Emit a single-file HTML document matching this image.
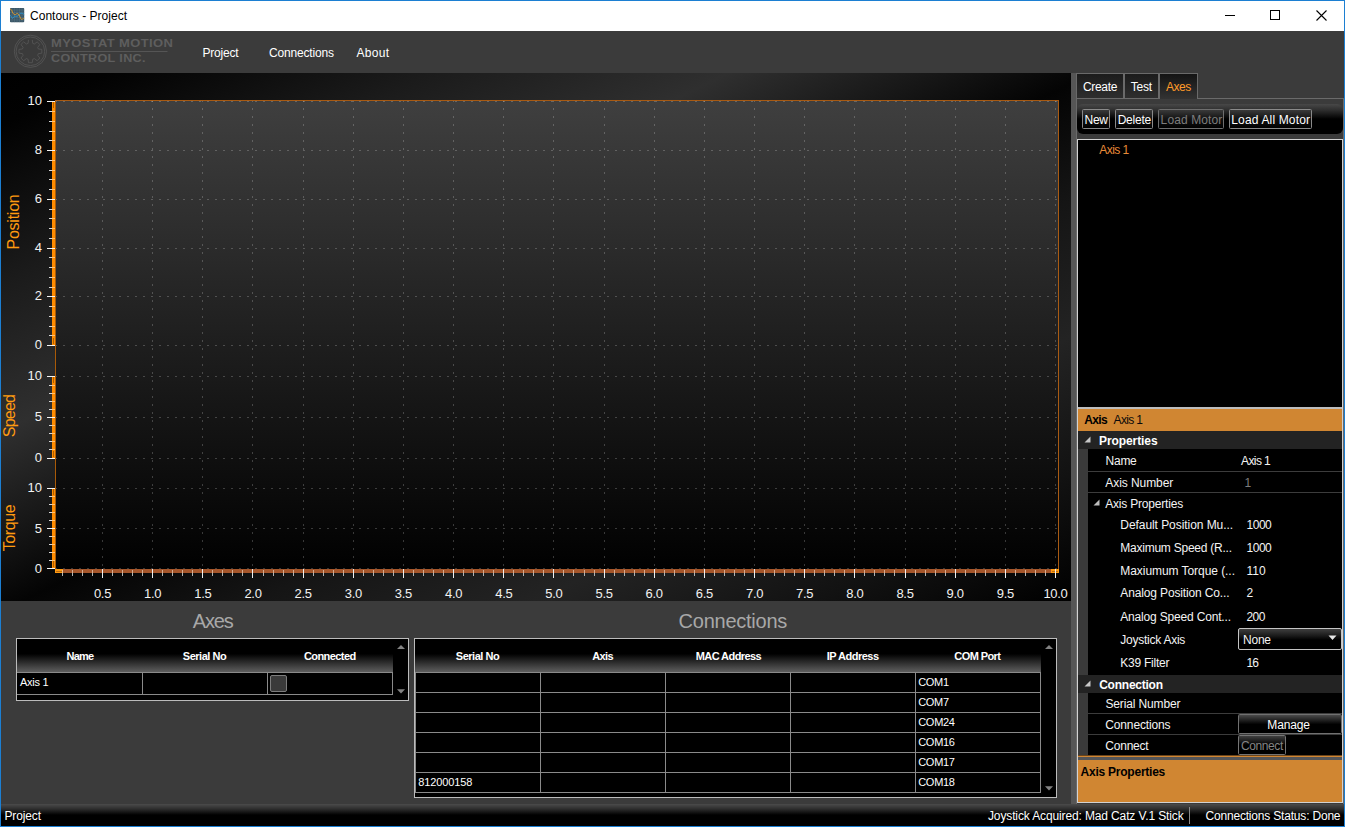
<!DOCTYPE html><html><head><meta charset="utf-8"><title>Contours - Project</title><style>
*{box-sizing:border-box;margin:0;padding:0}
html,body{width:1345px;height:827px;overflow:hidden;background:#3b3b3b}
body{position:relative;font-family:"Liberation Sans", sans-serif;font-size:12px;color:#fff}
.abs{position:absolute}
.ytick{position:absolute;left:0;width:42px;text-align:right;font-size:13px;line-height:16px;color:#f2f2f2}
.xtick{position:absolute;top:586px;width:40px;text-align:center;font-size:13px;line-height:16px;letter-spacing:-0.3px;color:#f2f2f2}
.ytitle{position:absolute;width:0;height:0;font-size:16px;color:#ff9a10;white-space:nowrap}
.ytitle span{position:absolute;left:0;top:0;line-height:20px;transform:translate(-50%,-50%) rotate(-90deg);display:block}
.t{position:absolute;white-space:nowrap}
</style></head><body>
<div class="abs" style="left:0;top:0;width:1345px;height:827px;background:#3b3b3b"></div>
<div class="abs" id="titlebar" style="left:0;top:0;width:1345px;height:31px;background:#fff"></div>
<svg class="abs" style="left:10px;top:8px" width="15" height="15" viewBox="0 0 15 15">
<rect x="0" y="0" width="14.2" height="14.2" rx="0.8" fill="#3a5666"/>
<g stroke="#5b7a8a" stroke-width="0.45" opacity="0.9"><path d="M0 2H14.2M0 4.5H14.2M0 7H14.2M0 9.5H14.2M0 12H14.2M2 0V14.2M4.5 0V14.2M7 0V14.2M9.5 0V14.2M12 0V14.2"/></g>
<path d="M0 7.5 C1 7.6 1.3 8.6 1.8 9.6 S3 10.6 3.6 9.2 S4.6 8.3 5.6 8.3 S7.6 8.4 8.6 7.3 S9.6 5.4 10.8 5.3 S13 5.4 14.2 6.6" fill="none" stroke="#2a9ad8" stroke-width="0.9"/>
<path d="M0 1.3 C1 1.3 1.6 1.6 2 3 S3 5.8 4.2 6.4 S5.8 6.3 6.6 5.7 S8.2 5.6 9 7 S10 9.2 10.6 10.3 S11.6 11.8 12.6 11 S13.6 10.5 14.2 10.5" fill="none" stroke="#e09a2c" stroke-width="0.95"/>
</svg>
<div class="t" style="left:30.0px;top:7.5px;font-size:12px;line-height:16px;letter-spacing:0.02px;color:#000;">Contours - Project</div>
<svg class="abs" style="left:1210px;top:1px" width="134" height="30" viewBox="0 0 134 30" shape-rendering="crispEdges">
<rect x="15" y="14" width="10" height="1" fill="#000"/>
<rect x="60.5" y="9.5" width="9" height="9" fill="none" stroke="#000" stroke-width="1"/>
<g shape-rendering="geometricPrecision"><path d="M106.5 9.5 L116.5 19.5 M116.5 9.5 L106.5 19.5" stroke="#000" stroke-width="1.1" fill="none"/></g>
</svg>
<svg class="abs" style="left:12px;top:33px" width="165" height="38" viewBox="12 33 165 38">
<g fill="none" stroke="#5a5a5a" stroke-width="0.75">
<circle cx="30.4" cy="51.3" r="16.1"/><circle cx="30.4" cy="51.3" r="14.3"/>
<path d="M32.30 39.86 L32.72 43.33 L34.40 44.03 L37.14 41.86 L39.84 44.56 L37.67 47.30 L38.37 48.98 L41.84 49.40 L41.84 53.20 L38.37 53.62 L37.67 55.30 L39.84 58.04 L37.14 60.74 L34.40 58.57 L32.72 59.27 L32.30 62.74 L28.50 62.74 L28.08 59.27 L26.40 58.57 L23.66 60.74 L20.96 58.04 L23.13 55.30 L22.43 53.62 L18.96 53.20 L18.96 49.40 L22.43 48.98 L23.13 47.30 L20.96 44.56 L23.66 41.86 L26.40 44.03 L28.08 43.33 L28.50 39.86" stroke-linejoin="round"/>
</g>
<rect x="51" y="51" width="116.5" height="1" fill="#555"/>
</svg>
<div class="t" style="left:50.6px;top:37.1px;font-size:10.7px;line-height:12px;font-weight:bold;letter-spacing:0.3px;color:#5e5e5e;transform:scaleX(1.215);transform-origin:0 50%">MYOSTAT MOTION</div>
<div class="t" style="left:50.6px;top:52.4px;font-size:10.7px;line-height:12px;font-weight:bold;letter-spacing:0.3px;color:#5e5e5e;transform:scaleX(1.177);transform-origin:0 50%">CONTROL INC.</div>
<div class="t" style="left:202.4px;top:44.5px;font-size:12px;line-height:16px;letter-spacing:-0.19px;color:#fff;">Project</div>
<div class="t" style="left:269.0px;top:44.5px;font-size:12px;line-height:16px;letter-spacing:-0.17px;color:#fff;">Connections</div>
<div class="t" style="left:356.5px;top:44.5px;font-size:12px;line-height:16px;letter-spacing:0.29px;color:#fff;">About</div>
<svg class="abs" style="left:0;top:0" width="1345" height="827" viewBox="0 0 1345 827" shape-rendering="crispEdges">
<defs>
<linearGradient id="gOuter" x1="0" y1="0" x2="1" y2="1"><stop offset="0" stop-color="#000"/><stop offset="0.05" stop-color="#020202"/><stop offset="0.2" stop-color="#1b1b1b"/><stop offset="0.34" stop-color="#2f2f2f"/><stop offset="0.44" stop-color="#161616"/><stop offset="0.51" stop-color="#040404"/><stop offset="0.62" stop-color="#151515"/><stop offset="0.75" stop-color="#232323"/><stop offset="0.88" stop-color="#121212"/><stop offset="1" stop-color="#000"/></linearGradient>
<linearGradient id="gPlot" x1="0" y1="0" x2="0" y2="1"><stop offset="0" stop-color="#3f3f3f"/><stop offset="0.5" stop-color="#1f1f1f"/><stop offset="1" stop-color="#010101"/></linearGradient>
</defs>
<rect x="1" y="73" width="1070" height="528" fill="url(#gOuter)"/>
<rect x="55" y="101" width="1004" height="468" fill="url(#gPlot)"/>
<rect x="55" y="100" width="1004" height="1" fill="#a85a12"/>
<rect x="1058" y="101" width="1" height="468" fill="#a85a12"/>
<line x1="102.5" y1="100" x2="102.5" y2="569" stroke="#fff" stroke-opacity="0.21" stroke-width="1" stroke-dasharray="2 6"/>
<line x1="152.5" y1="100" x2="152.5" y2="569" stroke="#fff" stroke-opacity="0.21" stroke-width="1" stroke-dasharray="2 6"/>
<line x1="202.5" y1="100" x2="202.5" y2="569" stroke="#fff" stroke-opacity="0.21" stroke-width="1" stroke-dasharray="2 6"/>
<line x1="252.5" y1="100" x2="252.5" y2="569" stroke="#fff" stroke-opacity="0.21" stroke-width="1" stroke-dasharray="2 6"/>
<line x1="303.5" y1="100" x2="303.5" y2="569" stroke="#fff" stroke-opacity="0.21" stroke-width="1" stroke-dasharray="2 6"/>
<line x1="353.5" y1="100" x2="353.5" y2="569" stroke="#fff" stroke-opacity="0.21" stroke-width="1" stroke-dasharray="2 6"/>
<line x1="403.5" y1="100" x2="403.5" y2="569" stroke="#fff" stroke-opacity="0.21" stroke-width="1" stroke-dasharray="2 6"/>
<line x1="453.5" y1="100" x2="453.5" y2="569" stroke="#fff" stroke-opacity="0.21" stroke-width="1" stroke-dasharray="2 6"/>
<line x1="503.5" y1="100" x2="503.5" y2="569" stroke="#fff" stroke-opacity="0.21" stroke-width="1" stroke-dasharray="2 6"/>
<line x1="553.5" y1="100" x2="553.5" y2="569" stroke="#fff" stroke-opacity="0.21" stroke-width="1" stroke-dasharray="2 6"/>
<line x1="604.5" y1="100" x2="604.5" y2="569" stroke="#fff" stroke-opacity="0.21" stroke-width="1" stroke-dasharray="2 6"/>
<line x1="654.5" y1="100" x2="654.5" y2="569" stroke="#fff" stroke-opacity="0.21" stroke-width="1" stroke-dasharray="2 6"/>
<line x1="704.5" y1="100" x2="704.5" y2="569" stroke="#fff" stroke-opacity="0.21" stroke-width="1" stroke-dasharray="2 6"/>
<line x1="754.5" y1="100" x2="754.5" y2="569" stroke="#fff" stroke-opacity="0.21" stroke-width="1" stroke-dasharray="2 6"/>
<line x1="804.5" y1="100" x2="804.5" y2="569" stroke="#fff" stroke-opacity="0.21" stroke-width="1" stroke-dasharray="2 6"/>
<line x1="854.5" y1="100" x2="854.5" y2="569" stroke="#fff" stroke-opacity="0.21" stroke-width="1" stroke-dasharray="2 6"/>
<line x1="905.5" y1="100" x2="905.5" y2="569" stroke="#fff" stroke-opacity="0.21" stroke-width="1" stroke-dasharray="2 6"/>
<line x1="955.5" y1="100" x2="955.5" y2="569" stroke="#fff" stroke-opacity="0.21" stroke-width="1" stroke-dasharray="2 6"/>
<line x1="1005.5" y1="100" x2="1005.5" y2="569" stroke="#fff" stroke-opacity="0.21" stroke-width="1" stroke-dasharray="2 6"/>
<line x1="1055.5" y1="100" x2="1055.5" y2="569" stroke="#fff" stroke-opacity="0.21" stroke-width="1" stroke-dasharray="2 6"/>
<line x1="55" y1="345.5" x2="1058" y2="345.5" stroke="#fff" stroke-opacity="0.21" stroke-width="1" stroke-dasharray="2 6"/>
<line x1="55" y1="296.5" x2="1058" y2="296.5" stroke="#fff" stroke-opacity="0.21" stroke-width="1" stroke-dasharray="2 6"/>
<line x1="55" y1="248.5" x2="1058" y2="248.5" stroke="#fff" stroke-opacity="0.21" stroke-width="1" stroke-dasharray="2 6"/>
<line x1="55" y1="199.5" x2="1058" y2="199.5" stroke="#fff" stroke-opacity="0.21" stroke-width="1" stroke-dasharray="2 6"/>
<line x1="55" y1="150.5" x2="1058" y2="150.5" stroke="#fff" stroke-opacity="0.21" stroke-width="1" stroke-dasharray="2 6"/>
<line x1="55" y1="101.5" x2="1058" y2="101.5" stroke="#fff" stroke-opacity="0.21" stroke-width="1" stroke-dasharray="2 6"/>
<rect x="52" y="101" width="3" height="245" fill="#ff8c00"/><rect x="55" y="101" width="1" height="245" fill="#a85a08"/>
<line x1="55" y1="458.5" x2="1058" y2="458.5" stroke="#fff" stroke-opacity="0.21" stroke-width="1" stroke-dasharray="2 6"/>
<line x1="55" y1="417.5" x2="1058" y2="417.5" stroke="#fff" stroke-opacity="0.21" stroke-width="1" stroke-dasharray="2 6"/>
<line x1="55" y1="376.5" x2="1058" y2="376.5" stroke="#fff" stroke-opacity="0.21" stroke-width="1" stroke-dasharray="2 6"/>
<rect x="52" y="376" width="3" height="83" fill="#ff8c00"/><rect x="55" y="376" width="1" height="83" fill="#a85a08"/>
<line x1="55" y1="568.5" x2="1058" y2="568.5" stroke="#fff" stroke-opacity="0.21" stroke-width="1" stroke-dasharray="2 6"/>
<line x1="55" y1="528.5" x2="1058" y2="528.5" stroke="#fff" stroke-opacity="0.21" stroke-width="1" stroke-dasharray="2 6"/>
<line x1="55" y1="488.5" x2="1058" y2="488.5" stroke="#fff" stroke-opacity="0.21" stroke-width="1" stroke-dasharray="2 6"/>
<rect x="52" y="488" width="3" height="81" fill="#ff8c00"/><rect x="55" y="488" width="1" height="81" fill="#a85a08"/>
<rect x="55" y="100" width="1" height="469" fill="#a85a08"/>
<rect x="47" y="345" width="8" height="1" fill="#f4f4f4"/>
<rect x="49" y="335" width="3" height="1" fill="#d8d8d8"/><rect x="52" y="335" width="3" height="1" fill="#ffc070"/>
<rect x="49" y="326" width="3" height="1" fill="#d8d8d8"/><rect x="52" y="326" width="3" height="1" fill="#ffc070"/>
<rect x="49" y="316" width="3" height="1" fill="#d8d8d8"/><rect x="52" y="316" width="3" height="1" fill="#ffc070"/>
<rect x="49" y="306" width="3" height="1" fill="#d8d8d8"/><rect x="52" y="306" width="3" height="1" fill="#ffc070"/>
<rect x="47" y="296" width="8" height="1" fill="#f4f4f4"/>
<rect x="49" y="287" width="3" height="1" fill="#d8d8d8"/><rect x="52" y="287" width="3" height="1" fill="#ffc070"/>
<rect x="49" y="277" width="3" height="1" fill="#d8d8d8"/><rect x="52" y="277" width="3" height="1" fill="#ffc070"/>
<rect x="49" y="267" width="3" height="1" fill="#d8d8d8"/><rect x="52" y="267" width="3" height="1" fill="#ffc070"/>
<rect x="49" y="257" width="3" height="1" fill="#d8d8d8"/><rect x="52" y="257" width="3" height="1" fill="#ffc070"/>
<rect x="47" y="248" width="8" height="1" fill="#f4f4f4"/>
<rect x="49" y="238" width="3" height="1" fill="#d8d8d8"/><rect x="52" y="238" width="3" height="1" fill="#ffc070"/>
<rect x="49" y="228" width="3" height="1" fill="#d8d8d8"/><rect x="52" y="228" width="3" height="1" fill="#ffc070"/>
<rect x="49" y="218" width="3" height="1" fill="#d8d8d8"/><rect x="52" y="218" width="3" height="1" fill="#ffc070"/>
<rect x="49" y="209" width="3" height="1" fill="#d8d8d8"/><rect x="52" y="209" width="3" height="1" fill="#ffc070"/>
<rect x="47" y="199" width="8" height="1" fill="#f4f4f4"/>
<rect x="49" y="189" width="3" height="1" fill="#d8d8d8"/><rect x="52" y="189" width="3" height="1" fill="#ffc070"/>
<rect x="49" y="179" width="3" height="1" fill="#d8d8d8"/><rect x="52" y="179" width="3" height="1" fill="#ffc070"/>
<rect x="49" y="170" width="3" height="1" fill="#d8d8d8"/><rect x="52" y="170" width="3" height="1" fill="#ffc070"/>
<rect x="49" y="160" width="3" height="1" fill="#d8d8d8"/><rect x="52" y="160" width="3" height="1" fill="#ffc070"/>
<rect x="47" y="150" width="8" height="1" fill="#f4f4f4"/>
<rect x="49" y="140" width="3" height="1" fill="#d8d8d8"/><rect x="52" y="140" width="3" height="1" fill="#ffc070"/>
<rect x="49" y="131" width="3" height="1" fill="#d8d8d8"/><rect x="52" y="131" width="3" height="1" fill="#ffc070"/>
<rect x="49" y="121" width="3" height="1" fill="#d8d8d8"/><rect x="52" y="121" width="3" height="1" fill="#ffc070"/>
<rect x="49" y="111" width="3" height="1" fill="#d8d8d8"/><rect x="52" y="111" width="3" height="1" fill="#ffc070"/>
<rect x="47" y="101" width="8" height="1" fill="#f4f4f4"/>
<rect x="47" y="458" width="8" height="1" fill="#f4f4f4"/>
<rect x="49" y="449" width="3" height="1" fill="#d8d8d8"/><rect x="52" y="449" width="3" height="1" fill="#ffc070"/>
<rect x="49" y="441" width="3" height="1" fill="#d8d8d8"/><rect x="52" y="441" width="3" height="1" fill="#ffc070"/>
<rect x="49" y="433" width="3" height="1" fill="#d8d8d8"/><rect x="52" y="433" width="3" height="1" fill="#ffc070"/>
<rect x="49" y="425" width="3" height="1" fill="#d8d8d8"/><rect x="52" y="425" width="3" height="1" fill="#ffc070"/>
<rect x="47" y="417" width="8" height="1" fill="#f4f4f4"/>
<rect x="49" y="409" width="3" height="1" fill="#d8d8d8"/><rect x="52" y="409" width="3" height="1" fill="#ffc070"/>
<rect x="49" y="401" width="3" height="1" fill="#d8d8d8"/><rect x="52" y="401" width="3" height="1" fill="#ffc070"/>
<rect x="49" y="393" width="3" height="1" fill="#d8d8d8"/><rect x="52" y="393" width="3" height="1" fill="#ffc070"/>
<rect x="49" y="385" width="3" height="1" fill="#d8d8d8"/><rect x="52" y="385" width="3" height="1" fill="#ffc070"/>
<rect x="47" y="376" width="8" height="1" fill="#f4f4f4"/>
<rect x="47" y="568" width="8" height="1" fill="#f4f4f4"/>
<rect x="49" y="560" width="3" height="1" fill="#d8d8d8"/><rect x="52" y="560" width="3" height="1" fill="#ffc070"/>
<rect x="49" y="552" width="3" height="1" fill="#d8d8d8"/><rect x="52" y="552" width="3" height="1" fill="#ffc070"/>
<rect x="49" y="544" width="3" height="1" fill="#d8d8d8"/><rect x="52" y="544" width="3" height="1" fill="#ffc070"/>
<rect x="49" y="536" width="3" height="1" fill="#d8d8d8"/><rect x="52" y="536" width="3" height="1" fill="#ffc070"/>
<rect x="47" y="528" width="8" height="1" fill="#f4f4f4"/>
<rect x="49" y="520" width="3" height="1" fill="#d8d8d8"/><rect x="52" y="520" width="3" height="1" fill="#ffc070"/>
<rect x="49" y="512" width="3" height="1" fill="#d8d8d8"/><rect x="52" y="512" width="3" height="1" fill="#ffc070"/>
<rect x="49" y="504" width="3" height="1" fill="#d8d8d8"/><rect x="52" y="504" width="3" height="1" fill="#ffc070"/>
<rect x="49" y="496" width="3" height="1" fill="#d8d8d8"/><rect x="52" y="496" width="3" height="1" fill="#ffc070"/>
<rect x="47" y="488" width="8" height="1" fill="#f4f4f4"/>
<rect x="53" y="102" width="1" height="6" fill="#b06000"/><rect x="53" y="338" width="1" height="6" fill="#b06000"/>
<rect x="53" y="377" width="1" height="6" fill="#b06000"/><rect x="53" y="451" width="1" height="6" fill="#b06000"/>
<rect x="53" y="489" width="1" height="6" fill="#b06000"/><rect x="53" y="561" width="1" height="6" fill="#b06000"/>
<rect x="55" y="569" width="1004" height="4" fill="#a5562b"/>
<rect x="55" y="569" width="8" height="4" fill="#ff9a10"/>
<rect x="56" y="570.5" width="6" height="1" fill="#b86a10"/>
<rect x="1051" y="569" width="8" height="4" fill="#ff9a10"/>
<rect x="1052" y="570.5" width="6" height="1" fill="#b86a10"/>
<rect x="62" y="570" width="1" height="3" fill="#e8c8b0" fill-opacity="0.75"/><rect x="62" y="573" width="1" height="3" fill="#b4b4b4"/>
<rect x="72" y="570" width="1" height="3" fill="#e8c8b0" fill-opacity="0.75"/><rect x="72" y="573" width="1" height="3" fill="#b4b4b4"/>
<rect x="82" y="570" width="1" height="3" fill="#e8c8b0" fill-opacity="0.75"/><rect x="82" y="573" width="1" height="3" fill="#b4b4b4"/>
<rect x="92" y="570" width="1" height="3" fill="#e8c8b0" fill-opacity="0.75"/><rect x="92" y="573" width="1" height="3" fill="#b4b4b4"/>
<rect x="102" y="569" width="1" height="9" fill="#f0f0f0"/>
<rect x="112" y="570" width="1" height="3" fill="#e8c8b0" fill-opacity="0.75"/><rect x="112" y="573" width="1" height="3" fill="#b4b4b4"/>
<rect x="122" y="570" width="1" height="3" fill="#e8c8b0" fill-opacity="0.75"/><rect x="122" y="573" width="1" height="3" fill="#b4b4b4"/>
<rect x="132" y="570" width="1" height="3" fill="#e8c8b0" fill-opacity="0.75"/><rect x="132" y="573" width="1" height="3" fill="#b4b4b4"/>
<rect x="142" y="570" width="1" height="3" fill="#e8c8b0" fill-opacity="0.75"/><rect x="142" y="573" width="1" height="3" fill="#b4b4b4"/>
<rect x="152" y="569" width="1" height="9" fill="#f0f0f0"/>
<rect x="162" y="570" width="1" height="3" fill="#e8c8b0" fill-opacity="0.75"/><rect x="162" y="573" width="1" height="3" fill="#b4b4b4"/>
<rect x="172" y="570" width="1" height="3" fill="#e8c8b0" fill-opacity="0.75"/><rect x="172" y="573" width="1" height="3" fill="#b4b4b4"/>
<rect x="182" y="570" width="1" height="3" fill="#e8c8b0" fill-opacity="0.75"/><rect x="182" y="573" width="1" height="3" fill="#b4b4b4"/>
<rect x="192" y="570" width="1" height="3" fill="#e8c8b0" fill-opacity="0.75"/><rect x="192" y="573" width="1" height="3" fill="#b4b4b4"/>
<rect x="202" y="569" width="1" height="9" fill="#f0f0f0"/>
<rect x="212" y="570" width="1" height="3" fill="#e8c8b0" fill-opacity="0.75"/><rect x="212" y="573" width="1" height="3" fill="#b4b4b4"/>
<rect x="222" y="570" width="1" height="3" fill="#e8c8b0" fill-opacity="0.75"/><rect x="222" y="573" width="1" height="3" fill="#b4b4b4"/>
<rect x="232" y="570" width="1" height="3" fill="#e8c8b0" fill-opacity="0.75"/><rect x="232" y="573" width="1" height="3" fill="#b4b4b4"/>
<rect x="242" y="570" width="1" height="3" fill="#e8c8b0" fill-opacity="0.75"/><rect x="242" y="573" width="1" height="3" fill="#b4b4b4"/>
<rect x="252" y="569" width="1" height="9" fill="#f0f0f0"/>
<rect x="263" y="570" width="1" height="3" fill="#e8c8b0" fill-opacity="0.75"/><rect x="263" y="573" width="1" height="3" fill="#b4b4b4"/>
<rect x="273" y="570" width="1" height="3" fill="#e8c8b0" fill-opacity="0.75"/><rect x="273" y="573" width="1" height="3" fill="#b4b4b4"/>
<rect x="283" y="570" width="1" height="3" fill="#e8c8b0" fill-opacity="0.75"/><rect x="283" y="573" width="1" height="3" fill="#b4b4b4"/>
<rect x="293" y="570" width="1" height="3" fill="#e8c8b0" fill-opacity="0.75"/><rect x="293" y="573" width="1" height="3" fill="#b4b4b4"/>
<rect x="303" y="569" width="1" height="9" fill="#f0f0f0"/>
<rect x="313" y="570" width="1" height="3" fill="#e8c8b0" fill-opacity="0.75"/><rect x="313" y="573" width="1" height="3" fill="#b4b4b4"/>
<rect x="323" y="570" width="1" height="3" fill="#e8c8b0" fill-opacity="0.75"/><rect x="323" y="573" width="1" height="3" fill="#b4b4b4"/>
<rect x="333" y="570" width="1" height="3" fill="#e8c8b0" fill-opacity="0.75"/><rect x="333" y="573" width="1" height="3" fill="#b4b4b4"/>
<rect x="343" y="570" width="1" height="3" fill="#e8c8b0" fill-opacity="0.75"/><rect x="343" y="573" width="1" height="3" fill="#b4b4b4"/>
<rect x="353" y="569" width="1" height="9" fill="#f0f0f0"/>
<rect x="363" y="570" width="1" height="3" fill="#e8c8b0" fill-opacity="0.75"/><rect x="363" y="573" width="1" height="3" fill="#b4b4b4"/>
<rect x="373" y="570" width="1" height="3" fill="#e8c8b0" fill-opacity="0.75"/><rect x="373" y="573" width="1" height="3" fill="#b4b4b4"/>
<rect x="383" y="570" width="1" height="3" fill="#e8c8b0" fill-opacity="0.75"/><rect x="383" y="573" width="1" height="3" fill="#b4b4b4"/>
<rect x="393" y="570" width="1" height="3" fill="#e8c8b0" fill-opacity="0.75"/><rect x="393" y="573" width="1" height="3" fill="#b4b4b4"/>
<rect x="403" y="569" width="1" height="9" fill="#f0f0f0"/>
<rect x="413" y="570" width="1" height="3" fill="#e8c8b0" fill-opacity="0.75"/><rect x="413" y="573" width="1" height="3" fill="#b4b4b4"/>
<rect x="423" y="570" width="1" height="3" fill="#e8c8b0" fill-opacity="0.75"/><rect x="423" y="573" width="1" height="3" fill="#b4b4b4"/>
<rect x="433" y="570" width="1" height="3" fill="#e8c8b0" fill-opacity="0.75"/><rect x="433" y="573" width="1" height="3" fill="#b4b4b4"/>
<rect x="443" y="570" width="1" height="3" fill="#e8c8b0" fill-opacity="0.75"/><rect x="443" y="573" width="1" height="3" fill="#b4b4b4"/>
<rect x="453" y="569" width="1" height="9" fill="#f0f0f0"/>
<rect x="463" y="570" width="1" height="3" fill="#e8c8b0" fill-opacity="0.75"/><rect x="463" y="573" width="1" height="3" fill="#b4b4b4"/>
<rect x="473" y="570" width="1" height="3" fill="#e8c8b0" fill-opacity="0.75"/><rect x="473" y="573" width="1" height="3" fill="#b4b4b4"/>
<rect x="483" y="570" width="1" height="3" fill="#e8c8b0" fill-opacity="0.75"/><rect x="483" y="573" width="1" height="3" fill="#b4b4b4"/>
<rect x="493" y="570" width="1" height="3" fill="#e8c8b0" fill-opacity="0.75"/><rect x="493" y="573" width="1" height="3" fill="#b4b4b4"/>
<rect x="503" y="569" width="1" height="9" fill="#f0f0f0"/>
<rect x="513" y="570" width="1" height="3" fill="#e8c8b0" fill-opacity="0.75"/><rect x="513" y="573" width="1" height="3" fill="#b4b4b4"/>
<rect x="523" y="570" width="1" height="3" fill="#e8c8b0" fill-opacity="0.75"/><rect x="523" y="573" width="1" height="3" fill="#b4b4b4"/>
<rect x="533" y="570" width="1" height="3" fill="#e8c8b0" fill-opacity="0.75"/><rect x="533" y="573" width="1" height="3" fill="#b4b4b4"/>
<rect x="543" y="570" width="1" height="3" fill="#e8c8b0" fill-opacity="0.75"/><rect x="543" y="573" width="1" height="3" fill="#b4b4b4"/>
<rect x="553" y="569" width="1" height="9" fill="#f0f0f0"/>
<rect x="563" y="570" width="1" height="3" fill="#e8c8b0" fill-opacity="0.75"/><rect x="563" y="573" width="1" height="3" fill="#b4b4b4"/>
<rect x="573" y="570" width="1" height="3" fill="#e8c8b0" fill-opacity="0.75"/><rect x="573" y="573" width="1" height="3" fill="#b4b4b4"/>
<rect x="584" y="570" width="1" height="3" fill="#e8c8b0" fill-opacity="0.75"/><rect x="584" y="573" width="1" height="3" fill="#b4b4b4"/>
<rect x="594" y="570" width="1" height="3" fill="#e8c8b0" fill-opacity="0.75"/><rect x="594" y="573" width="1" height="3" fill="#b4b4b4"/>
<rect x="604" y="569" width="1" height="9" fill="#f0f0f0"/>
<rect x="614" y="570" width="1" height="3" fill="#e8c8b0" fill-opacity="0.75"/><rect x="614" y="573" width="1" height="3" fill="#b4b4b4"/>
<rect x="624" y="570" width="1" height="3" fill="#e8c8b0" fill-opacity="0.75"/><rect x="624" y="573" width="1" height="3" fill="#b4b4b4"/>
<rect x="634" y="570" width="1" height="3" fill="#e8c8b0" fill-opacity="0.75"/><rect x="634" y="573" width="1" height="3" fill="#b4b4b4"/>
<rect x="644" y="570" width="1" height="3" fill="#e8c8b0" fill-opacity="0.75"/><rect x="644" y="573" width="1" height="3" fill="#b4b4b4"/>
<rect x="654" y="569" width="1" height="9" fill="#f0f0f0"/>
<rect x="664" y="570" width="1" height="3" fill="#e8c8b0" fill-opacity="0.75"/><rect x="664" y="573" width="1" height="3" fill="#b4b4b4"/>
<rect x="674" y="570" width="1" height="3" fill="#e8c8b0" fill-opacity="0.75"/><rect x="674" y="573" width="1" height="3" fill="#b4b4b4"/>
<rect x="684" y="570" width="1" height="3" fill="#e8c8b0" fill-opacity="0.75"/><rect x="684" y="573" width="1" height="3" fill="#b4b4b4"/>
<rect x="694" y="570" width="1" height="3" fill="#e8c8b0" fill-opacity="0.75"/><rect x="694" y="573" width="1" height="3" fill="#b4b4b4"/>
<rect x="704" y="569" width="1" height="9" fill="#f0f0f0"/>
<rect x="714" y="570" width="1" height="3" fill="#e8c8b0" fill-opacity="0.75"/><rect x="714" y="573" width="1" height="3" fill="#b4b4b4"/>
<rect x="724" y="570" width="1" height="3" fill="#e8c8b0" fill-opacity="0.75"/><rect x="724" y="573" width="1" height="3" fill="#b4b4b4"/>
<rect x="734" y="570" width="1" height="3" fill="#e8c8b0" fill-opacity="0.75"/><rect x="734" y="573" width="1" height="3" fill="#b4b4b4"/>
<rect x="744" y="570" width="1" height="3" fill="#e8c8b0" fill-opacity="0.75"/><rect x="744" y="573" width="1" height="3" fill="#b4b4b4"/>
<rect x="754" y="569" width="1" height="9" fill="#f0f0f0"/>
<rect x="764" y="570" width="1" height="3" fill="#e8c8b0" fill-opacity="0.75"/><rect x="764" y="573" width="1" height="3" fill="#b4b4b4"/>
<rect x="774" y="570" width="1" height="3" fill="#e8c8b0" fill-opacity="0.75"/><rect x="774" y="573" width="1" height="3" fill="#b4b4b4"/>
<rect x="784" y="570" width="1" height="3" fill="#e8c8b0" fill-opacity="0.75"/><rect x="784" y="573" width="1" height="3" fill="#b4b4b4"/>
<rect x="794" y="570" width="1" height="3" fill="#e8c8b0" fill-opacity="0.75"/><rect x="794" y="573" width="1" height="3" fill="#b4b4b4"/>
<rect x="804" y="569" width="1" height="9" fill="#f0f0f0"/>
<rect x="814" y="570" width="1" height="3" fill="#e8c8b0" fill-opacity="0.75"/><rect x="814" y="573" width="1" height="3" fill="#b4b4b4"/>
<rect x="824" y="570" width="1" height="3" fill="#e8c8b0" fill-opacity="0.75"/><rect x="824" y="573" width="1" height="3" fill="#b4b4b4"/>
<rect x="834" y="570" width="1" height="3" fill="#e8c8b0" fill-opacity="0.75"/><rect x="834" y="573" width="1" height="3" fill="#b4b4b4"/>
<rect x="844" y="570" width="1" height="3" fill="#e8c8b0" fill-opacity="0.75"/><rect x="844" y="573" width="1" height="3" fill="#b4b4b4"/>
<rect x="854" y="569" width="1" height="9" fill="#f0f0f0"/>
<rect x="864" y="570" width="1" height="3" fill="#e8c8b0" fill-opacity="0.75"/><rect x="864" y="573" width="1" height="3" fill="#b4b4b4"/>
<rect x="874" y="570" width="1" height="3" fill="#e8c8b0" fill-opacity="0.75"/><rect x="874" y="573" width="1" height="3" fill="#b4b4b4"/>
<rect x="884" y="570" width="1" height="3" fill="#e8c8b0" fill-opacity="0.75"/><rect x="884" y="573" width="1" height="3" fill="#b4b4b4"/>
<rect x="894" y="570" width="1" height="3" fill="#e8c8b0" fill-opacity="0.75"/><rect x="894" y="573" width="1" height="3" fill="#b4b4b4"/>
<rect x="905" y="569" width="1" height="9" fill="#f0f0f0"/>
<rect x="915" y="570" width="1" height="3" fill="#e8c8b0" fill-opacity="0.75"/><rect x="915" y="573" width="1" height="3" fill="#b4b4b4"/>
<rect x="925" y="570" width="1" height="3" fill="#e8c8b0" fill-opacity="0.75"/><rect x="925" y="573" width="1" height="3" fill="#b4b4b4"/>
<rect x="935" y="570" width="1" height="3" fill="#e8c8b0" fill-opacity="0.75"/><rect x="935" y="573" width="1" height="3" fill="#b4b4b4"/>
<rect x="945" y="570" width="1" height="3" fill="#e8c8b0" fill-opacity="0.75"/><rect x="945" y="573" width="1" height="3" fill="#b4b4b4"/>
<rect x="955" y="569" width="1" height="9" fill="#f0f0f0"/>
<rect x="965" y="570" width="1" height="3" fill="#e8c8b0" fill-opacity="0.75"/><rect x="965" y="573" width="1" height="3" fill="#b4b4b4"/>
<rect x="975" y="570" width="1" height="3" fill="#e8c8b0" fill-opacity="0.75"/><rect x="975" y="573" width="1" height="3" fill="#b4b4b4"/>
<rect x="985" y="570" width="1" height="3" fill="#e8c8b0" fill-opacity="0.75"/><rect x="985" y="573" width="1" height="3" fill="#b4b4b4"/>
<rect x="995" y="570" width="1" height="3" fill="#e8c8b0" fill-opacity="0.75"/><rect x="995" y="573" width="1" height="3" fill="#b4b4b4"/>
<rect x="1005" y="569" width="1" height="9" fill="#f0f0f0"/>
<rect x="1015" y="570" width="1" height="3" fill="#e8c8b0" fill-opacity="0.75"/><rect x="1015" y="573" width="1" height="3" fill="#b4b4b4"/>
<rect x="1025" y="570" width="1" height="3" fill="#e8c8b0" fill-opacity="0.75"/><rect x="1025" y="573" width="1" height="3" fill="#b4b4b4"/>
<rect x="1035" y="570" width="1" height="3" fill="#e8c8b0" fill-opacity="0.75"/><rect x="1035" y="573" width="1" height="3" fill="#b4b4b4"/>
<rect x="1045" y="570" width="1" height="3" fill="#e8c8b0" fill-opacity="0.75"/><rect x="1045" y="573" width="1" height="3" fill="#b4b4b4"/>
<rect x="1055" y="569" width="1" height="9" fill="#f0f0f0"/>
<rect x="55" y="100" width="1004" height="1" fill="#a85a12"/>
</svg>
<div class="ytick" style="top:337.2px">0</div>
<div class="ytick" style="top:288.4px">2</div>
<div class="ytick" style="top:239.7px">4</div>
<div class="ytick" style="top:190.9px">6</div>
<div class="ytick" style="top:142.2px">8</div>
<div class="ytick" style="top:93.4px">10</div>
<div class="ytick" style="top:449.6px">0</div>
<div class="ytick" style="top:409.0px">5</div>
<div class="ytick" style="top:368.4px">10</div>
<div class="ytick" style="top:560.5px">0</div>
<div class="ytick" style="top:520.5px">5</div>
<div class="ytick" style="top:480.4px">10</div>
<div class="xtick" style="left:82.5px">0.5</div>
<div class="xtick" style="left:132.7px">1.0</div>
<div class="xtick" style="left:182.8px">1.5</div>
<div class="xtick" style="left:233.0px">2.0</div>
<div class="xtick" style="left:283.1px">2.5</div>
<div class="xtick" style="left:333.3px">3.0</div>
<div class="xtick" style="left:383.4px">3.5</div>
<div class="xtick" style="left:433.6px">4.0</div>
<div class="xtick" style="left:483.8px">4.5</div>
<div class="xtick" style="left:533.9px">5.0</div>
<div class="xtick" style="left:584.1px">5.5</div>
<div class="xtick" style="left:634.2px">6.0</div>
<div class="xtick" style="left:684.4px">6.5</div>
<div class="xtick" style="left:734.6px">7.0</div>
<div class="xtick" style="left:784.7px">7.5</div>
<div class="xtick" style="left:834.9px">8.0</div>
<div class="xtick" style="left:885.0px">8.5</div>
<div class="xtick" style="left:935.2px">9.0</div>
<div class="xtick" style="left:985.3px">9.5</div>
<div class="xtick" style="left:1035.5px">10.0</div>
<div class="ytitle" style="left:13.6px;top:222.4px"><span style="letter-spacing:-0.23px">Position</span></div>
<div class="ytitle" style="left:9.6px;top:416px"><span style="letter-spacing:-0.8px">Speed</span></div>
<div class="ytitle" style="left:9.6px;top:528.1px"><span style="letter-spacing:-0.38px">Torque</span></div>
<div class="abs" style="left:1071px;top:73px;width:5px;height:731px;background:#565656"></div>
<div class="abs" style="left:1076px;top:73px;width:48px;height:26px;border:1px solid #6a6a6a;background:linear-gradient(#1c1c1c 0,#2e2e2e 100%)"></div>
<div class="abs" style="left:1124px;top:73px;width:35px;height:26px;border:1px solid #6a6a6a;background:linear-gradient(#1c1c1c 0,#2e2e2e 100%)"></div>
<div class="abs" style="left:1159px;top:73px;width:39px;height:26px;border:1px solid #6a6a6a;border-bottom:none;background:linear-gradient(#141414 0,#333 100%)"></div>
<div class="t" style="left:1083.0px;top:79.0px;font-size:12px;line-height:16px;letter-spacing:-0.34px;color:#fff;">Create</div>
<div class="t" style="left:1130.8px;top:79.0px;font-size:12px;line-height:16px;letter-spacing:-0.27px;color:#fff;">Test</div>
<div class="t" style="left:1166.0px;top:79.0px;font-size:12px;line-height:16px;letter-spacing:-0.49px;color:#ff9a28;">Axes</div>
<div class="abs" style="left:1197px;top:98px;width:147px;height:1px;background:#6a6a6a"></div>
<div class="abs" style="left:1076px;top:98px;width:1px;height:706px;background:#6a6a6a"></div>
<div class="abs" style="left:1343px;top:98px;width:1px;height:706px;background:#6a6a6a"></div>
<div class="abs" style="left:1077px;top:104px;width:266px;height:30px;border-radius:6px;background:linear-gradient(#484848 0,#2c2c2c 22%,#000 50%,#000 100%)"></div>
<div class="abs" style="left:1082px;top:109px;width:28px;height:20px;border:1px solid #8a8a8a;border-radius:1.5px;background:linear-gradient(#3a3a3a 0,#151515 45%,#000 100%)"></div><div class="t" style="left:1084.5px;top:112.0px;font-size:12px;line-height:16px;letter-spacing:-0.25px;color:#fff;">New</div>
<div class="abs" style="left:1115px;top:109px;width:38px;height:20px;border:1px solid #8a8a8a;border-radius:1.5px;background:linear-gradient(#3a3a3a 0,#151515 45%,#000 100%)"></div><div class="t" style="left:1117.7px;top:112.0px;font-size:12px;line-height:16px;letter-spacing:-0.24px;color:#fff;">Delete</div>
<div class="abs" style="left:1158px;top:109px;width:66px;height:20px;border:1px solid #6e6e6e;border-radius:1.5px;background:linear-gradient(#3a3a3a 0,#151515 45%,#000 100%)"></div><div class="t" style="left:1160.6px;top:112.0px;font-size:12px;line-height:16px;letter-spacing:0.11px;color:#7d7d7d;">Load Motor</div>
<div class="abs" style="left:1229px;top:109px;width:83px;height:20px;border:1px solid #8a8a8a;border-radius:1.5px;background:linear-gradient(#3a3a3a 0,#151515 45%,#000 100%)"></div><div class="t" style="left:1231.3px;top:112.0px;font-size:12px;line-height:16px;letter-spacing:0.15px;color:#fff;">Load All Motor</div>
<div class="abs" style="left:1077px;top:139px;width:266px;height:664px;background:#000;border:1px solid #d2d2d2"></div>
<div class="abs" style="left:1078px;top:407px;width:264px;height:2px;background:#bdbdbd"></div>
<div class="t" style="left:1099.2px;top:142.0px;font-size:12px;line-height:16px;letter-spacing:-0.52px;color:#e88a38;">Axis 1</div>
<div class="abs" style="left:1078px;top:409px;width:264px;height:22px;background:#d08632"></div>
<div class="t" style="left:1084.2px;top:412.0px;font-size:12px;line-height:16px;letter-spacing:-0.58px;color:#000;font-weight:bold;">Axis</div>
<div class="t" style="left:1113.6px;top:412.0px;font-size:12px;line-height:16px;letter-spacing:-0.66px;color:#0a0a0a;">Axis 1</div>
<div class="abs" style="left:1078px;top:431px;width:264px;height:324px;background:#000"></div>
<div class="abs" style="left:1078px;top:431px;width:264px;height:18px;background:#232323"></div>
<div class="abs" style="left:1078px;top:675px;width:264px;height:18px;background:#232323"></div>
<div class="abs" style="left:1078px;top:449px;width:10px;height:226px;background:#3a3a3a"></div>
<div class="abs" style="left:1078px;top:693px;width:10px;height:62px;background:#3a3a3a"></div>
<svg class="abs" style="left:1084px;top:435.5px" width="7" height="7" viewBox="0 0 7 7"><path d="M6.5 0.5 L6.5 6.5 L0.5 6.5 Z" fill="#c8c8c8"/></svg>
<div class="t" style="left:1099.0px;top:432.6px;font-size:12px;line-height:16px;letter-spacing:-0.08px;color:#fff;font-weight:bold;">Properties</div>
<svg class="abs" style="left:1084px;top:679.5px" width="7" height="7" viewBox="0 0 7 7"><path d="M6.5 0.5 L6.5 6.5 L0.5 6.5 Z" fill="#c8c8c8"/></svg>
<div class="t" style="left:1099.2px;top:677.0px;font-size:12px;line-height:16px;letter-spacing:-0.24px;color:#fff;font-weight:bold;">Connection</div>
<div class="abs" style="left:1088px;top:471px;width:254px;height:1px;background:#3c3c3c"></div>
<div class="abs" style="left:1088px;top:492px;width:254px;height:1px;background:#3c3c3c"></div>
<div class="abs" style="left:1088px;top:713px;width:254px;height:1px;background:#3c3c3c"></div>
<div class="abs" style="left:1088px;top:734px;width:254px;height:1px;background:#3c3c3c"></div>
<div class="t" style="left:1105.6px;top:452.8px;font-size:12px;line-height:16px;letter-spacing:-0.27px;color:#f4f4f4;">Name</div>
<div class="t" style="left:1241.0px;top:452.8px;font-size:12px;line-height:16px;letter-spacing:-0.58px;color:#f4f4f4;">Axis 1</div>
<div class="t" style="left:1105.3px;top:474.5px;font-size:12px;line-height:16px;letter-spacing:-0.07px;color:#f4f4f4;">Axis Number</div>
<div class="t" style="left:1244.5px;top:474.5px;font-size:12px;line-height:16px;letter-spacing:-1.20px;color:#7d7d7d;">1</div>
<svg class="abs" style="left:1093px;top:499px" width="7" height="7" viewBox="0 0 7 7"><path d="M6.5 0.5 L6.5 6.5 L0.5 6.5 Z" fill="#bdbdbd"/></svg>
<div class="t" style="left:1105.2px;top:495.6px;font-size:12px;line-height:16px;letter-spacing:-0.19px;color:#f4f4f4;">Axis Properties</div>
<div class="t" style="left:1120.3px;top:516.9px;font-size:12px;line-height:16px;letter-spacing:-0.06px;color:#f4f4f4;">Default Position Mu...</div>
<div class="t" style="left:1246.4px;top:516.9px;font-size:12px;line-height:16px;letter-spacing:-0.43px;color:#f4f4f4;">1000</div>
<div class="t" style="left:1120.3px;top:539.8px;font-size:12px;line-height:16px;letter-spacing:-0.24px;color:#f4f4f4;">Maximum Speed (R...</div>
<div class="t" style="left:1246.4px;top:539.8px;font-size:12px;line-height:16px;letter-spacing:-0.43px;color:#f4f4f4;">1000</div>
<div class="t" style="left:1120.3px;top:562.6px;font-size:12px;line-height:16px;letter-spacing:-0.06px;color:#f4f4f4;">Maxiumum Torque (...</div>
<div class="t" style="left:1246.4px;top:562.6px;font-size:12px;line-height:16px;letter-spacing:0.04px;color:#f4f4f4;">110</div>
<div class="t" style="left:1120.3px;top:585.4px;font-size:12px;line-height:16px;letter-spacing:-0.14px;color:#f4f4f4;">Analog Position Co...</div>
<div class="t" style="left:1246.4px;top:585.4px;font-size:12px;line-height:16px;letter-spacing:-0.07px;color:#f4f4f4;">2</div>
<div class="t" style="left:1120.3px;top:608.6px;font-size:12px;line-height:16px;letter-spacing:-0.18px;color:#f4f4f4;">Analog Speed Cont...</div>
<div class="t" style="left:1246.4px;top:608.6px;font-size:12px;line-height:16px;letter-spacing:-0.46px;color:#f4f4f4;">200</div>
<div class="t" style="left:1120.3px;top:631.6px;font-size:12px;line-height:16px;letter-spacing:-0.25px;color:#f4f4f4;">Joystick Axis</div>
<div class="t" style="left:1120.3px;top:654.5px;font-size:12px;line-height:16px;letter-spacing:-0.24px;color:#f4f4f4;">K39 Filter</div>
<div class="t" style="left:1246.4px;top:654.5px;font-size:12px;line-height:16px;letter-spacing:-0.75px;color:#f4f4f4;">16</div>
<div class="abs" style="left:1238px;top:628px;width:104px;height:22px;border:1px solid #c4c4c4;border-radius:2px;background:linear-gradient(#3e3e3e 0,#1c1c1c 32%,#000 55%)"></div>
<div class="t" style="left:1243.0px;top:631.6px;font-size:12px;line-height:16px;letter-spacing:-0.23px;color:#f4f4f4;">None</div>
<svg class="abs" style="left:1327.5px;top:634.8px" width="9" height="6" viewBox="0 0 9 6"><path d="M0.5 0.5 L8.5 0.5 L4.5 5 Z" fill="#e6e6e6"/></svg>
<div class="t" style="left:1105.4px;top:695.8px;font-size:12px;line-height:16px;letter-spacing:-0.13px;color:#f4f4f4;">Serial Number</div>
<div class="t" style="left:1105.3px;top:716.9px;font-size:12px;line-height:16px;letter-spacing:-0.15px;color:#f4f4f4;">Connections</div>
<div class="t" style="left:1105.3px;top:737.5px;font-size:12px;line-height:16px;letter-spacing:-0.22px;color:#f4f4f4;">Connect</div>
<div class="abs" style="left:1238px;top:714px;width:104px;height:20px;border:1px solid #707070;border-radius:1.5px;background:linear-gradient(#4a4a4a 0,#262626 25%,#000 52%,#000 100%)"></div><div class="t" style="left:1267.3px;top:717.0px;font-size:12px;line-height:16px;letter-spacing:-0.13px;color:#fff;">Manage</div>
<div class="abs" style="left:1238px;top:735px;width:48px;height:20px;border:1px solid #757575;border-radius:1.5px;background:linear-gradient(#404040 0,#1c1c1c 28%,#000 50%,#000 100%)"></div><div class="t" style="left:1241.0px;top:738.0px;font-size:12px;line-height:16px;letter-spacing:-0.40px;color:#858585;">Connect</div>
<div class="abs" style="left:1078px;top:755px;width:264px;height:47px;background:#d08632"></div>
<div class="abs" style="left:1078px;top:757px;width:264px;height:3px;background:#545558"></div>
<div class="abs" style="left:1078px;top:755px;width:264px;height:1px;background:#6a441a"></div>
<div class="t" style="left:1080.6px;top:764.0px;font-size:12px;line-height:16px;letter-spacing:-0.24px;color:#000;font-weight:bold;">Axis Properties</div>
<div class="t" style="left:192.8px;top:609.0px;font-size:20px;line-height:24px;letter-spacing:-1.20px;color:#a8a8a8;">Axes</div>
<div class="t" style="left:678.6px;top:609.0px;font-size:20px;line-height:24px;letter-spacing:-0.25px;color:#a8a8a8;">Connections</div>
<div class="abs" style="left:16px;top:638px;width:393px;height:63px;background:#000;border:1px solid #bcbcbc"></div>
<div class="abs" style="left:17px;top:639px;width:376px;height:33px;background:linear-gradient(#000 0,#000 45%,#3a3a3a 79%,#5e5e5e 100%)"></div>
<div class="t" style="left:66.5px;top:648.8px;font-size:11px;line-height:15px;letter-spacing:-0.80px;color:#fff;font-weight:bold;">Name</div>
<div class="t" style="left:182.8px;top:648.8px;font-size:11px;line-height:15px;letter-spacing:-0.48px;color:#fff;font-weight:bold;">Serial No</div>
<div class="t" style="left:303.9px;top:648.8px;font-size:11px;line-height:15px;letter-spacing:-0.57px;color:#fff;font-weight:bold;">Connected</div>
<div class="abs" style="left:17px;top:672px;width:376px;height:1px;background:#8a8a8a"></div>
<div class="abs" style="left:17px;top:694px;width:376px;height:1px;background:#8a8a8a"></div>
<div class="abs" style="left:142px;top:672px;width:1px;height:23px;background:#8a8a8a"></div>
<div class="abs" style="left:267px;top:672px;width:1px;height:23px;background:#8a8a8a"></div>
<div class="abs" style="left:392px;top:672px;width:1px;height:23px;background:#8a8a8a"></div>
<div class="t" style="left:20.0px;top:674.8px;font-size:11px;line-height:15px;letter-spacing:-0.29px;color:#fff;">Axis 1</div>
<div class="abs" style="left:270px;top:675px;width:17px;height:17px;background:#3a3a3a;border:1px solid #7c7c7c;border-radius:2px"></div>
<svg class="abs" style="left:0;top:0" width="1345" height="827" viewBox="0 0 1345 827"><path d="M397.0 649 L405.0 649 L401.0 645 Z" fill="#828282"/><path d="M397.0 689.2 L405.0 689.2 L401.0 693.5 Z" fill="#828282"/></svg>
<div class="abs" style="left:414px;top:638px;width:643px;height:160px;background:#000;border:1px solid #bcbcbc"></div>
<div class="abs" style="left:415px;top:639px;width:626px;height:33px;background:linear-gradient(#000 0,#000 45%,#3a3a3a 79%,#5e5e5e 100%)"></div>
<div class="t" style="left:455.8px;top:648.8px;font-size:11px;line-height:15px;letter-spacing:-0.48px;color:#fff;font-weight:bold;">Serial No</div>
<div class="t" style="left:592.3px;top:648.8px;font-size:11px;line-height:15px;letter-spacing:-0.62px;color:#fff;font-weight:bold;">Axis</div>
<div class="t" style="left:695.7px;top:648.8px;font-size:11px;line-height:15px;letter-spacing:-0.57px;color:#fff;font-weight:bold;">MAC Address</div>
<div class="t" style="left:826.8px;top:648.8px;font-size:11px;line-height:15px;letter-spacing:-0.51px;color:#fff;font-weight:bold;">IP Address</div>
<div class="t" style="left:954.3px;top:648.8px;font-size:11px;line-height:15px;letter-spacing:-0.58px;color:#fff;font-weight:bold;">COM Port</div>
<div class="abs" style="left:415px;top:672px;width:626px;height:1px;background:#8a8a8a"></div>
<div class="abs" style="left:415px;top:692px;width:626px;height:1px;background:#8a8a8a"></div>
<div class="abs" style="left:415px;top:712px;width:626px;height:1px;background:#8a8a8a"></div>
<div class="abs" style="left:415px;top:732px;width:626px;height:1px;background:#8a8a8a"></div>
<div class="abs" style="left:415px;top:752px;width:626px;height:1px;background:#8a8a8a"></div>
<div class="abs" style="left:415px;top:772px;width:626px;height:1px;background:#8a8a8a"></div>
<div class="abs" style="left:415px;top:792px;width:626px;height:1px;background:#8a8a8a"></div>
<div class="abs" style="left:415px;top:672px;width:1px;height:121px;background:#8a8a8a"></div>
<div class="abs" style="left:540px;top:672px;width:1px;height:121px;background:#8a8a8a"></div>
<div class="abs" style="left:665px;top:672px;width:1px;height:121px;background:#8a8a8a"></div>
<div class="abs" style="left:790px;top:672px;width:1px;height:121px;background:#8a8a8a"></div>
<div class="abs" style="left:915px;top:672px;width:1px;height:121px;background:#8a8a8a"></div>
<div class="abs" style="left:1040px;top:672px;width:1px;height:121px;background:#8a8a8a"></div>
<div class="t" style="left:918.2px;top:674.8px;font-size:11px;line-height:15px;letter-spacing:-0.32px;color:#fff;">COM1</div>
<div class="t" style="left:918.2px;top:694.8px;font-size:11px;line-height:15px;letter-spacing:-0.32px;color:#fff;">COM7</div>
<div class="t" style="left:918.2px;top:714.8px;font-size:11px;line-height:15px;letter-spacing:-0.28px;color:#fff;">COM24</div>
<div class="t" style="left:918.2px;top:734.8px;font-size:11px;line-height:15px;letter-spacing:-0.28px;color:#fff;">COM16</div>
<div class="t" style="left:918.2px;top:754.8px;font-size:11px;line-height:15px;letter-spacing:-0.28px;color:#fff;">COM17</div>
<div class="t" style="left:918.2px;top:774.8px;font-size:11px;line-height:15px;letter-spacing:-0.28px;color:#fff;">COM18</div>
<div class="t" style="left:418.3px;top:774.6px;font-size:11px;line-height:15px;letter-spacing:-0.11px;color:#fff;">812000158</div>
<svg class="abs" style="left:0;top:0" width="1345" height="827" viewBox="0 0 1345 827"><path d="M1045.0 649 L1053.0 649 L1049.0 645 Z" fill="#828282"/><path d="M1045.0 786.2 L1053.0 786.2 L1049.0 790.5 Z" fill="#828282"/></svg>
<div class="abs" style="left:1px;top:804px;width:1343px;height:22px;background:linear-gradient(#4b4b4b 0,#2e2e2e 22%,#000 50%,#000 100%)"></div>
<div class="t" style="left:4.5px;top:807.8px;font-size:12px;line-height:16px;letter-spacing:-0.14px;color:#fff;">Project</div>
<div class="t" style="left:988.0px;top:808.0px;font-size:12px;line-height:16px;letter-spacing:-0.13px;color:#fff;">Joystick Acquired: Mad Catz V.1 Stick</div>
<div class="abs" style="left:1189px;top:807px;width:1px;height:17px;background:#8a8a8a"></div>
<div class="t" style="left:1205.5px;top:808.0px;font-size:12px;line-height:16px;letter-spacing:-0.19px;color:#fff;">Connections Status: Done</div>
<div class="abs" style="left:0;top:0;width:1345px;height:827px;border:1px solid #1c7fd2;pointer-events:none"></div>
</body></html>
